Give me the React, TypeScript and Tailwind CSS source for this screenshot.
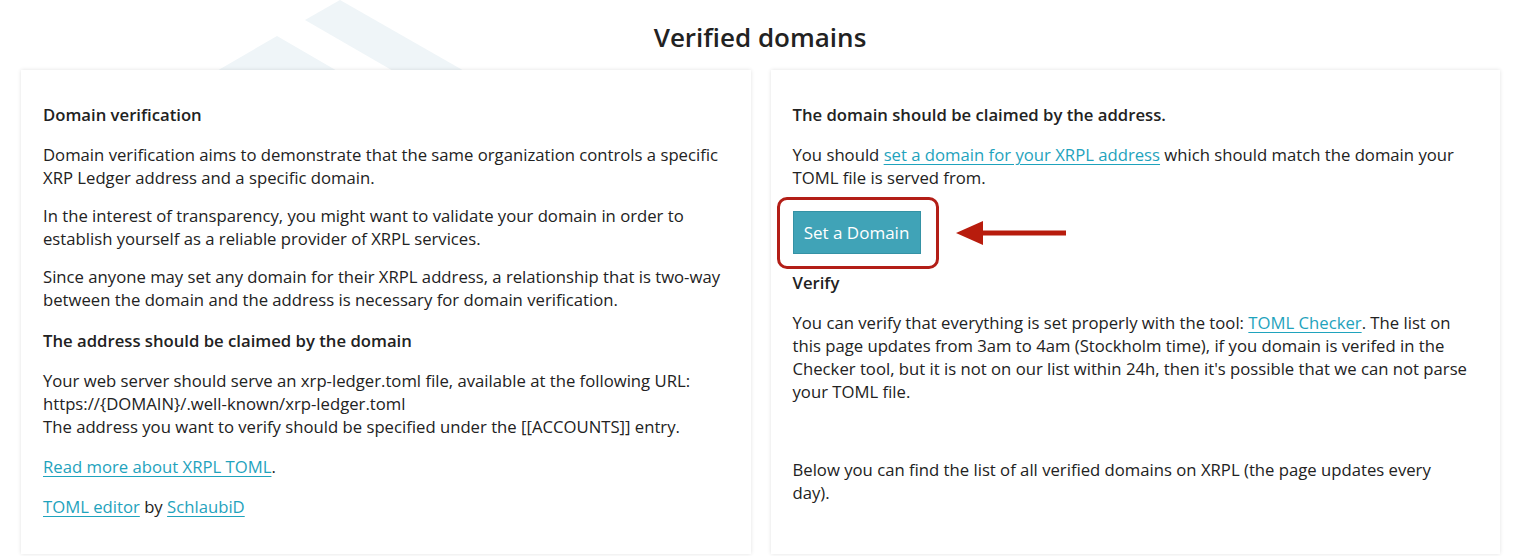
import React from "react";

const font = { fontFamily: '"Open Sans", "Liberation Sans", sans-serif' };

function Watermark() {
  return (
    <svg
      className="absolute left-0 top-0 pointer-events-none"
      width="500"
      height="72"
      viewBox="0 0 500 72"
      fill="#eff5f8"
    >
      <path d="M215 72 L277 36 L339 72 Z" />
      <path d="M305 20 L340 0 L466 72 L395 72 Z" />
    </svg>
  );
}

function A({ children }: { children: React.ReactNode }) {
  return (
    <a href="#" className="text-[#1fa3bd] underline underline-offset-[3px]">
      {children}
    </a>
  );
}

function Card({ children, right }: { children: React.ReactNode; right?: boolean }) {
  return (
    <div
      className={
        right
          ? "relative bg-white shadow-[0_0_4px_rgba(0,0,0,0.12)] pl-[22px] pr-[30px] pt-[33px] pb-6 h-[484px]"
          : "relative bg-white shadow-[0_0_4px_rgba(0,0,0,0.12)] px-[22px] pt-[33px] pb-6 h-[484px]"
      }
    >
      {children}
    </div>
  );
}

export default function App() {
  return (
    <div
      className="relative bg-white min-h-[556px] w-[1520px] overflow-hidden text-[#222] text-[16.7px] leading-[23px]"
      style={font}
    >
      <Watermark />
      <h1 className="relative text-center text-[26px] font-semibold leading-[36px] pt-[19px] pb-[15px]">
        Verified domains
      </h1>

      <div className="relative grid grid-cols-2 gap-5 pl-[21px] pr-5">
        <Card>
          <p className="font-semibold mb-[17px]">Domain verification</p>
          <p className="mb-[15px]">
            Domain verification aims to demonstrate that the same organization
            controls a specific XRP Ledger address and a specific domain.
          </p>
          <p className="mb-[15px]">
            In the interest of transparency, you might want to validate your
            domain in order to establish yourself as a reliable provider of XRPL
            services.
          </p>
          <p className="mb-[18px]">
            Since anyone may set any domain for their XRPL address, a
            relationship that is two-way between the domain and the address is
            necessary for domain verification.
          </p>
          <p className="font-semibold mb-[17px]">
            The address should be claimed by the domain
          </p>
          <p className="mb-[17px]">
            Your web server should serve an xrp-ledger.toml file, available at
            the following URL:
            <br />
            https://{"{DOMAIN}"}/.well-known/xrp-ledger.toml
            <br />
            The address you want to verify should be specified under the
            [[ACCOUNTS]] entry.
          </p>
          <p className="mb-[17px]">
            <A>Read more about XRPL TOML</A>.
          </p>
          <p>
            <A>TOML editor</A> by <A>SchlaubiD</A>
          </p>
        </Card>

        <Card right>
          <p className="font-semibold mb-[17px]">
            The domain should be claimed by the address.
          </p>
          <p>
            You should <A>set a domain for your XRPL address</A> which should
            match the domain your TOML file is served from.
          </p>
          <div className="relative mt-[22px] mb-[17px] flex">
            <button className="h-[43px] w-[128px] bg-[#40a3b7] border border-[#3592a5] text-white text-[17px]">
              Set a Domain
            </button>
            <div className="absolute left-[-16px] top-[-14px] w-[162px] h-[72px] rounded-[10px] border-[3px] border-[#b31e17]" />
            <svg
              className="absolute left-[163px] top-[9px]"
              width="112"
              height="28"
              viewBox="0 0 112 28"
            >
              <path d="M0 13 L27 1 L27 25 Z" fill="#b81c0d" />
              <rect x="26" y="10.5" width="84" height="5" fill="#b81c0d" />
            </svg>
          </div>
          <p className="font-semibold mb-[17px]">Verify</p>
          <p className="mb-[55px]">
            You can verify that everything is set properly with the tool:{" "}
            <A>TOML Checker</A>. The list on this page updates from 3am to 4am
            (Stockholm time), if you domain is verifed in the Checker tool, but
            it is not on our list within 24h, then it's possible that we can not
            parse your TOML file.
          </p>
          <p>
            Below you can find the list of all verified domains on XRPL (the
            page updates every day).
          </p>
        </Card>
      </div>
    </div>
  );
}
